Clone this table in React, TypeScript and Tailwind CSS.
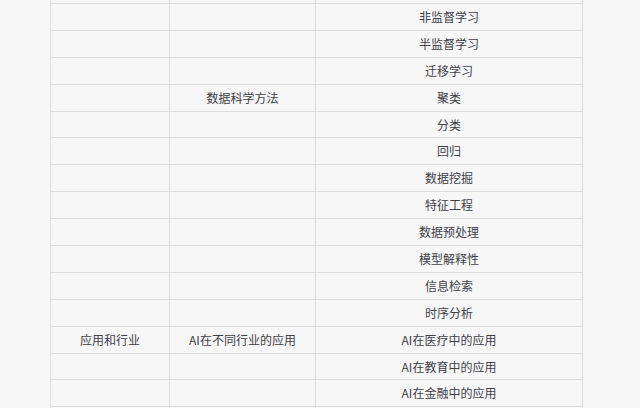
import React from "react";

const rows: [string, string, string][] = [
  ["", "", ""],
  ["", "", "非监督学习"],
  ["", "", "半监督学习"],
  ["", "", "迁移学习"],
  ["", "数据科学方法", "聚类"],
  ["", "", "分类"],
  ["", "", "回归"],
  ["", "", "数据挖掘"],
  ["", "", "特征工程"],
  ["", "", "数据预处理"],
  ["", "", "模型解释性"],
  ["", "", "信息检索"],
  ["", "", "时序分析"],
  ["应用和行业", "AI在不同行业的应用", "AI在医疗中的应用"],
  ["", "", "AI在教育中的应用"],
  ["", "", "AI在金融中的应用"],
  ["", "", ""],
];

export default function App() {
  return (
    <div
      className="w-[640px] h-[408px] overflow-hidden bg-[#f7f7f8] text-[#404046] text-[12px]"
      style={{ fontFamily: '"Noto Sans CJK SC", "Noto Sans", sans-serif' }}
    >
      <div className="ml-[50px] mt-[-23.9px] w-[533px]">
        {rows.map((r, i) => (
          <div
            key={i}
            className="grid grid-cols-[119px_146px_268px] h-[26.9px] border-t border-[#dcdce0]"
          >
            <div className="flex items-center justify-center border-l border-[#dcdce0]">{r[0]}</div>
            <div className="flex items-center justify-center border-l border-[#dcdce0]">{r[1]}</div>
            <div className="flex items-center justify-center border-l border-r border-[#dcdce0]">{r[2]}</div>
          </div>
        ))}
      </div>
    </div>
  );
}
